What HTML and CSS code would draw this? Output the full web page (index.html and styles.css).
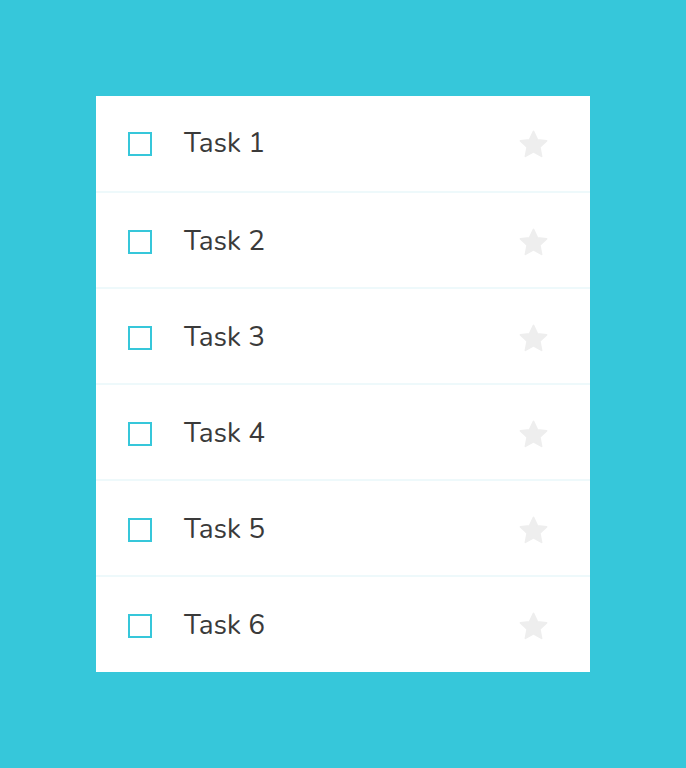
FILE: index.html
```html
<!DOCTYPE html>
<html>
<head>
<meta charset="utf-8">
<link rel="stylesheet" href="styles.css">
</head>
<body>
<div class="page">
  <ul class="list">
    <li class="task"><span class="check"></span><span class="label">Task 1</span><svg class="star" viewBox="0 0 24 24"><path d="M12 2.5l2.9 6.1 6.6.8-4.9 4.6 1.3 6.6L12 17.3l-5.9 3.3 1.3-6.6-4.9-4.6 6.6-.8z"/></svg></li>
    <li class="task"><span class="check"></span><span class="label">Task 2</span><svg class="star" viewBox="0 0 24 24"><path d="M12 2.5l2.9 6.1 6.6.8-4.9 4.6 1.3 6.6L12 17.3l-5.9 3.3 1.3-6.6-4.9-4.6 6.6-.8z"/></svg></li>
    <li class="task"><span class="check"></span><span class="label">Task 3</span><svg class="star" viewBox="0 0 24 24"><path d="M12 2.5l2.9 6.1 6.6.8-4.9 4.6 1.3 6.6L12 17.3l-5.9 3.3 1.3-6.6-4.9-4.6 6.6-.8z"/></svg></li>
    <li class="task"><span class="check"></span><span class="label">Task 4</span><svg class="star" viewBox="0 0 24 24"><path d="M12 2.5l2.9 6.1 6.6.8-4.9 4.6 1.3 6.6L12 17.3l-5.9 3.3 1.3-6.6-4.9-4.6 6.6-.8z"/></svg></li>
    <li class="task"><span class="check"></span><span class="label">Task 5</span><svg class="star" viewBox="0 0 24 24"><path d="M12 2.5l2.9 6.1 6.6.8-4.9 4.6 1.3 6.6L12 17.3l-5.9 3.3 1.3-6.6-4.9-4.6 6.6-.8z"/></svg></li>
    <li class="task"><span class="check"></span><span class="label">Task 6</span><svg class="star" viewBox="0 0 24 24"><path d="M12 2.5l2.9 6.1 6.6.8-4.9 4.6 1.3 6.6L12 17.3l-5.9 3.3 1.3-6.6-4.9-4.6 6.6-.8z"/></svg></li>
  </ul>
</div>
</body>
</html>
```
FILE: styles.css
```css
html, body {
  margin: 0;
  padding: 0;
}
body {
  background: #36c7da;
  font-family: "Nunito", "Lato", "Open Sans", sans-serif;
}
.page {
  padding: 96px 96px;
  height: 768px;
  box-sizing: border-box;
}
.list {
  list-style: none;
  margin: 0;
  padding: 0;
  width: 494px;
  background: #fff;
}
.task {
  display: flex;
  align-items: center;
  height: 96px;
  box-sizing: border-box;
  padding: 4px 40px 0 32px;
}
.task:first-child {
  height: 95px;
  padding-top: 1px;
}
.task + .task {
  border-top: 2px solid #eef9fb;
}
.task:last-child {
  height: 97px;
  padding-top: 3px;
}
.check {
  width: 24px;
  height: 24px;
  box-sizing: border-box;
  border: 2px solid #36c7da;
  flex: none;
}
.label {
  flex: 1;
  margin-left: 32px;
  font-size: 28px;
  color: #3a3a3a;
  line-height: 1;
  padding-bottom: 2px;
}
.star {
  width: 33px;
  height: 33px;
  flex: none;
}
.star path {
  fill: #eeeeee;
  stroke: #eeeeee;
  stroke-width: 1.2;
  stroke-linejoin: round;
}
```
